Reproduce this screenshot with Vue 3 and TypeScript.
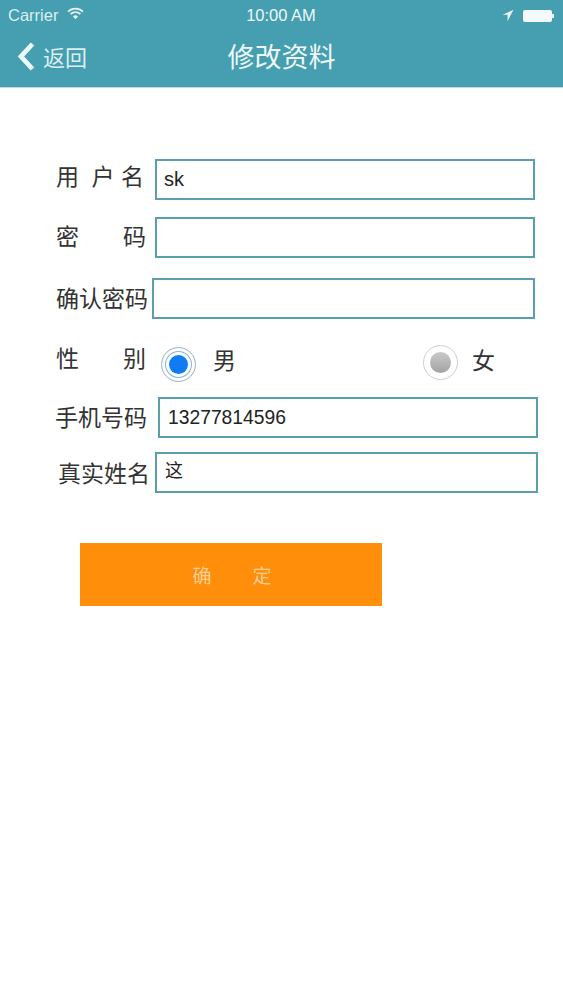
<script setup lang="ts">
interface Field {
  chars: string[];
  value: string;
  rowClass: string;
  valueClass?: string;
}

const fieldsTop: Field[] = [
  { chars: ["用", "户", "名"], value: "sk", rowClass: "row-name" },
  { chars: ["密", "码"], value: "", rowClass: "row-pass" },
  { chars: ["确", "认", "密", "码"], value: "", rowClass: "row-confirm" },
];
const fieldsBottom: Field[] = [
  { chars: ["手", "机", "号", "码"], value: "13277814596", rowClass: "row-phone", valueClass: "phone" },
  { chars: ["真", "实", "姓", "名"], value: "这", rowClass: "row-real", valueClass: "real" },
];
</script>

<template>
  <div class="page">
    <header class="header">
      <div class="status">
        <div class="status-left">
          <span>Carrier</span>
          <svg class="wifi" width="17" height="13" viewBox="0 0 16 12">
            <path d="M1 4.2a10 10 0 0 1 14 0" fill="none" stroke="#e3f2f4" stroke-width="1.7" />
            <path d="M3.4 6.6a6.6 6.6 0 0 1 9.2 0" fill="none" stroke="#e3f2f4" stroke-width="1.7" />
            <path d="M8 11.4 5.6 8.8a3.4 3.4 0 0 1 4.8 0z" fill="#e3f2f4" />
          </svg>
        </div>
        <span class="clock">10:00 AM</span>
        <div class="status-right">
          <svg width="12" height="13" viewBox="0 0 11 12">
            <path d="M10.5.8 0.5 5.4h4.6v5.8z" fill="#eef7f8" />
          </svg>
          <div class="battery"></div>
          <div class="battery-tip"></div>
        </div>
      </div>
      <div class="nav">
        <div class="back">
          <svg width="18" height="29" viewBox="0 0 18 29">
            <path d="M15.5 2 4 14.5l11.5 12.5" fill="none" stroke="#eef7f8" stroke-width="4.8" />
          </svg>
          <span>返回</span>
        </div>
        <h1 class="title">修改资料</h1>
      </div>
    </header>

    <main class="form">
      <div v-for="f in fieldsTop" :key="f.rowClass" class="row" :class="f.rowClass">
        <div class="label"><span v-for="c in f.chars" :key="c">{{ c }}</span></div>
        <div class="input" :class="f.valueClass">{{ f.value }}</div>
      </div>

      <div class="row row-gender">
        <div class="label"><span>性</span><span>别</span></div>
        <div class="gender">
          <div class="option male">
            <div class="radio on"><div class="dot"></div></div>
            <span>男</span>
          </div>
          <div class="option female">
            <div class="radio off"><div class="dot"></div></div>
            <span>女</span>
          </div>
        </div>
      </div>

      <div v-for="f in fieldsBottom" :key="f.rowClass" class="row" :class="f.rowClass">
        <div class="label"><span v-for="c in f.chars" :key="c">{{ c }}</span></div>
        <div class="input" :class="f.valueClass">{{ f.value }}</div>
      </div>

      <button class="submit" type="button"><span>确</span><span>定</span></button>
    </main>
  </div>
</template>

<style>
html, body { margin: 0; background: #fff; }
</style>

<style scoped>
.page {
  width: 563px;
  height: 1000px;
  background: #fff;
  font-family: "Liberation Sans", "Noto Sans CJK SC", sans-serif;
  color: #333;
  overflow: hidden;
}
.header {
  height: 87px;
  background: #459fb0;
  border-bottom: 1px solid #b9dde3;
  color: #eef7f8;
}
.status {
  box-sizing: border-box;
  height: 29px;
  display: grid;
  grid-template-columns: 1fr auto 1fr;
  align-items: center;
  padding: 2px 9px 0 8px;
  font-size: 16.5px;
}
.status-left { display: flex; align-items: center; gap: 9px; color: #dceef1; }
.wifi { margin-top: -4px; }
.clock { font-size: 16.5px; }
.status-right { display: flex; align-items: center; justify-content: flex-end; }
.status-right svg { margin-right: 9px; }
.battery { width: 29px; height: 12px; background: #f4fafb; border-radius: 2px; }
.battery-tip { width: 2px; height: 4px; background: #dceef1; }
.nav {
  position: relative;
  height: 58px;
  display: flex;
  align-items: center;
  justify-content: center;
}
.back {
  position: absolute;
  left: 17px;
  top: 11px;
  display: flex;
  align-items: center;
  gap: 8px;
  font-size: 22px;
  color: #dceef1;
}
.title { margin: 0 0 5px; font-size: 27px; font-weight: 400; }

.form { padding: 71px 0 0 56px; }
.row { display: flex; align-items: center; }
.label {
  width: 90px;
  flex: none;
  display: flex;
  justify-content: space-between;
  font-size: 23px;
  line-height: 32px;
}
.input {
  box-sizing: border-box;
  height: 41px;
  flex: none;
  border: 2px solid #5a9fad;
  background: #fff;
  padding-left: 7px;
  font-size: 20px;
  line-height: 37px;
  color: #222;
}
.row-name .label { width: 88px; margin-bottom: 6px; }
.row-name .label span:nth-child(2) { margin-left: 6px; }
.row-name .input { margin-left: 11px; width: 380px; }
.row-pass { margin-top: 17px; }
.row-pass .label { margin-bottom: 2px; }
.row-pass .input { margin-left: 9px; width: 380px; }
.row-confirm { margin-top: 20px; }
.row-confirm .input { margin-left: 6px; width: 383px; }
.row-gender { margin-top: 27px; height: 37px; }
.row-gender .label { margin-top: -12px; }
.gender {
  margin-left: 15px;
  width: 334px;
  display: flex;
  justify-content: space-between;
  font-size: 23px;
}
.option { display: flex; align-items: center; }
.option span { margin-bottom: 12px; }
.male { gap: 17px; }
.female { gap: 14px; }
.radio {
  box-sizing: border-box;
  width: 35px;
  height: 35px;
  border-radius: 50%;
  display: flex;
  align-items: center;
  justify-content: center;
}
.radio.on { border: 1px solid #a9b4c2; box-shadow: inset 0 0 0 3px #fff, inset 0 0 0 4px #7fb4ee; }
.radio.on .dot { width: 19px; height: 19px; background: #0f7cf5; }
.radio.off { border: 1px solid #cfcfcf; margin-top: -5px; }
.radio.off .dot { width: 21px; height: 21px; background: linear-gradient(#c9c9c9, #a3a3a3); }
.dot { border-radius: 50%; }
.row-phone { margin-top: 14px; }
.row-phone .label { margin-left: -1px; }
.row-phone .input { margin-left: 13px; width: 380px; padding-left: 8px; font-size: 19.3px; }
.row-real { margin-top: 14px; }
.row-real .label { margin-left: 2px; margin-right: 5px; margin-top: 2px; width: 92px; }
.row-real .input { margin-left: 0; width: 383px; padding-left: 8px; font-size: 18px; line-height: 34px; }

.submit {
  display: flex;
  justify-content: center;
  gap: 41px;
  align-items: center;
  width: 302px;
  height: 63px;
  margin: 50px 0 0 24px;
  padding: 0 0 0 2px;
  border: 0;
  background: #ff8e0a;
  color: #fbcf96;
  font-family: inherit;
  font-size: 19px;
}
</style>
